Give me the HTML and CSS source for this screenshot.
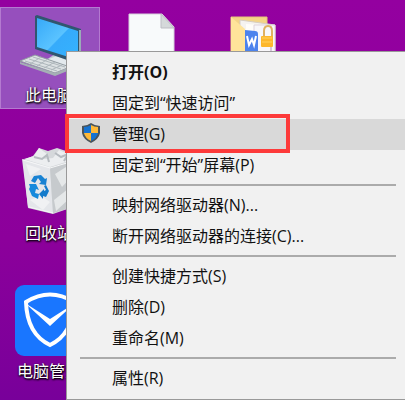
FILE: index.html
```html
<!DOCTYPE html>
<html lang="zh-CN">
<head>
    <meta charset="UTF-8">
    <meta name="viewport" content="width=device-width, initial-scale=1.0">
    <title>此电脑</title>
    <link rel="stylesheet" href="styles.css">
</head>
<body>

<main class="desktop">
    <button class="shortcut selected">
        <svg class="icon" viewBox="0 0 80 76" aria-hidden="true">
            <defs>
                <linearGradient id="screen" x1="0" y1="0" x2="1" y2="1">
                    <stop offset="0" stop-color="#36a9f8"/>
                    <stop offset="0.5" stop-color="#5ac3ff"/>
                    <stop offset="0.52" stop-color="#36abfb"/>
                    <stop offset="1" stop-color="#35b3ff"/>
                </linearGradient>
            </defs>
            <path d="M36 52l9-6 20 6v5l-8 2z" fill="#bfcbd2"/>
            <path d="M36 52l11-4 18 8-8 3z" fill="#e3e9ed"/>
            <path d="M25 8l2-1 44 14v34l-2 1-44-15z" fill="#31566f"/>
            <path d="M70 22v32" stroke="#9aacb8" stroke-width="2"/>
            <path d="M27 10l41 13v29L27 39z" fill="url(#screen)"/>
            <path d="M10 53l15-6 35 12-15 6z" fill="#dce1e3" stroke="#929ca2"/>
            <path d="M10 54v2l35 12 15-6v-3l-15 6z" fill="#a5afb5"/>
            <path d="M15 53l32 10M19 51l32 10M23 49l32 10M20 56l11-7M27 58l11-7M34 60l11-6M41 62l11-5" stroke="#aeb7bc" fill="none"/>
        </svg>
        <span class="name">此电脑</span>
    </button>
    <button class="shortcut" aria-label="文件">
        <svg class="icon" viewBox="0 0 80 76" aria-hidden="true">
            <path d="M17 6h33l12 13v57H17z" fill="#f8fafb" stroke="#d6d1dc"/>
            <path d="M49 6l13 14H49z" fill="#d5d9da" stroke="#bdbdc4"/>
        </svg>
    </button>
    <button class="shortcut" aria-label="文件夹">
        <svg class="icon" viewBox="0 0 80 76" aria-hidden="true">
            <path d="M17 9h36v67H17z" fill="#f4d487" stroke="#e4c37b"/>
            <path d="M26 12l35 5v59H26z" fill="#f5f3f0" stroke="#d6cdc2"/>
            <path d="M32 16l29 2v58H32z" fill="#fffdf9"/>
            <path d="M17 9l14 12v55H17z" fill="#ffe49a"/>
            <path d="M40 17h21v59H40z" fill="#f8f7fa" stroke="#ddd3dc"/>
            <path d="M31 22l10 1q3 0 3 3v50H31z" fill="#4c83ed"/>
            <path d="M33 28l2 9 3-6 2 6 2-9" fill="none" stroke="#fff" stroke-width="2"/>
            <path d="M50 29v-6q0-5 4-5t4 5v6" fill="none" stroke="#dfb163" stroke-width="2"/>
            <rect x="47" y="28" width="12" height="11" rx="1" fill="#fdb72c"/>
            <path d="M48 30h10M48 34h10" stroke="#ffd261"/>
            <path d="M57 39v4" stroke="#b494b6"/>
        </svg>
    </button>
    <button class="shortcut second">
        <svg class="icon" viewBox="0 0 80 76" aria-hidden="true">
            <path d="M13 14l10-4 6-8 9 3 9-3 9 3 13 8-6 48-20 7-25-6z" fill="#d5d8db"/>
            <path d="M12 13l28 8 3 46-25-6z" fill="#e4e6ea"/>
            <path d="M40 21l29-7-6 47-20 6z" fill="#c6cacd"/>
            <path d="M14 13l10-3 5-8 8 6-3 5 9-1 6-8 9 4-1 6 8-1-25 8z" fill="#eceef0"/>
            <path d="M24 11l8 2 5-4 2 7M45 7l6 4 7-3-4 7" fill="none" stroke="#b6bbc0" stroke-width="2"/>
            <path d="M16 18l15 5-11 7zM20 54l11-4 9 6-7 8zM45 28l11-7 6 9-10 11zM44 54l14-11 2 9-14 13z" fill="#f6f7f8" opacity=".65"/>
            <path d="M13 14l27 8 27-8M19 61l24 6" stroke="#f6f7f8" fill="none"/>
            <path d="M24 30l7-1 4 4 2-1-1 7-7-1 2-2-3-4-3 5-4-2z" fill="#1882d3"/>
            <path d="M19 38l7 0 3 6-3-1-1 4 4 1-1 5-6-3-3-7 1-2z" fill="#1689dc"/>
            <path d="M36 39l3 6-3 6-3-1v3l-4-5 5-5v2l2-1-2-4z" fill="#147bcb"/>
        </svg>
        <span class="name">回收站</span>
    </button>
    <button class="shortcut third">
        <svg class="icon" viewBox="0 0 80 76" aria-hidden="true">
            <rect x="5" y="1" width="71" height="71" rx="9" fill="#1976ff"/>
            <path d="M16 18q24-15 48 0-1 32-24 43Q17 50 16 18z" fill="none" stroke="#fff" stroke-width="4"/>
            <path d="M15 19l25 23 25-23-25 16z" fill="#fff"/>
        </svg>
        <span class="name">电脑管家</span>
    </button>
</main>

<ul class="menu">
    <li><button class="item default">打开(O)</button></li>
    <li><button class="item">固定到“快速访问”</button></li>
    <li class="current">
        <button class="item">
            <svg class="shield" viewBox="0 0 20 22" aria-hidden="true">
                <path d="M10 1q4 3 9 3v7q-1 6-9 10-8-4-9-10V4q5 0 9-3z" fill="#4b555b"/>
                <path d="M10 3v8H3V5q4 0 7-2z" fill="#1673d1"/>
                <path d="M10 3q3 2 7 2v6h-7z" fill="#ffb936"/>
                <path d="M3 11h7v8q-6-3-7-8z" fill="#ffb936"/>
                <path d="M10 11h7q-1 5-7 8z" fill="#1673d1"/>
            </svg>
            管理(G)
        </button>
        <span class="marker"></span>
    </li>
    <li><button class="item">固定到“开始”屏幕(P)</button></li>
    <li class="line"></li>
    <li><button class="item">映射网络驱动器(N)...</button></li>
    <li><button class="item">断开网络驱动器的连接(C)...</button></li>
    <li class="line"></li>
    <li><button class="item">创建快捷方式(S)</button></li>
    <li><button class="item">删除(D)</button></li>
    <li><button class="item">重命名(M)</button></li>
    <li class="line"></li>
    <li><button class="item">属性(R)</button></li>
</ul>

</body>
</html>
```
FILE: styles.css
```css
* {
    box-sizing: border-box;
}
body {
    margin: 0;
    min-height: 100vh;
    position: relative;
    overflow: hidden;
    background: linear-gradient(#9400a0, #8c009b 60%, #78009a);
    font-family: "Open Sans", "Noto Sans CJK SC", sans-serif;
    font-size: 16px;
}
button {
    font: inherit;
    border: none;
    background: none;
    padding: 0;
}

/* desktop icons */
.desktop {
    display: grid;
    grid-template-columns: repeat(auto-fill, 100px);
    grid-auto-rows: 102px;
    gap: 36px 2px;
    padding-top: 7px;
}
.shortcut {
    display: flex;
    flex-direction: column;
    align-items: center;
    border: 1px solid transparent;
    color: #fff;
}
.selected {
    background: #964fbd;
    border-color: #b47ad0;
}
.second {
    grid-row: 2;
    grid-column: 1;
}
.third {
    grid-row: 3;
    grid-column: 1;
}
.icon {
    width: 80px;
    height: 76px;
    flex: none;
}
.name {
    padding-right: 2px;
    line-height: 22px;
    white-space: nowrap;
    text-shadow: 1px 1px 2px #000, 0 1px 2px #000;
}

/* context menu */
.menu {
    position: absolute;
    top: 51px;
    left: 66px;
    right: -1px;
    margin: 0;
    padding: 5px 0;
    list-style: none;
    background: #f1f1f1;
    border: 1px solid #999;
}
.item {
    display: flex;
    align-items: center;
    width: 100%;
    height: 31px;
    padding: 0 0 3px 45px;
    color: #111;
    white-space: nowrap;
}
.default {
    font-weight: bold;
}
.current {
    position: relative;
}
.current .item {
    background: #d9d9d9;
    padding-left: 13px;
}
.shield {
    width: 22px;
    height: 22px;
    margin-right: 10px;
}
.marker {
    position: absolute;
    top: -5px;
    bottom: -3px;
    left: -2px;
    width: 225px;
    border: 4px solid #fd3a3a;
    pointer-events: none;
}
.line {
    height: 9px;
    margin: 0 9px 0 13px;
    padding-top: 3px;
}
.line::before {
    content: "";
    display: block;
    height: 2px;
    background: #ababab;
}
```
